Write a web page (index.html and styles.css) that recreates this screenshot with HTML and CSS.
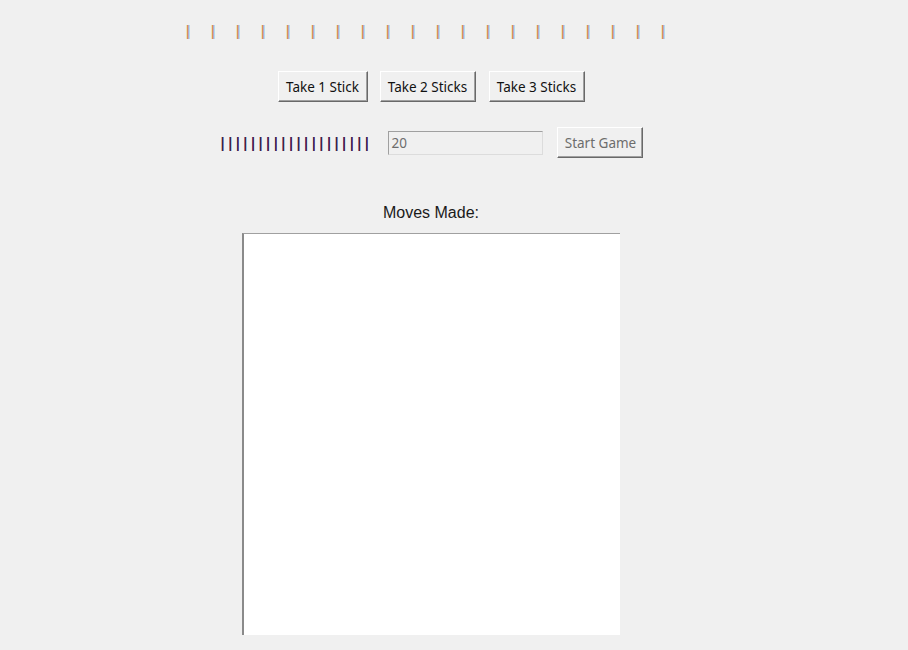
FILE: index.html
```html
<!DOCTYPE html>
<html lang="en">
<head>
<meta charset="utf-8">
<title>Sticks Game</title>
<link rel="stylesheet" href="styles.css">
</head>
<body>
<div class="app">
  <div class="pile">
    <span class="stick">|</span><span class="stick">|</span><span class="stick">|</span><span class="stick">|</span><span class="stick">|</span>
    <span class="stick">|</span><span class="stick">|</span><span class="stick">|</span><span class="stick">|</span><span class="stick">|</span>
    <span class="stick">|</span><span class="stick">|</span><span class="stick">|</span><span class="stick">|</span><span class="stick">|</span>
    <span class="stick">|</span><span class="stick">|</span><span class="stick">|</span><span class="stick">|</span><span class="stick">|</span>
  </div>
  <div class="moves">
    <button class="btn btn-1">Take 1 Stick</button>
    <button class="btn btn-2">Take 2 Sticks</button>
    <button class="btn btn-3">Take 3 Sticks</button>
  </div>
  <div class="setup">
    <span class="mini">||||||||||||||||||||</span>
    <input class="count" type="text" value="20" disabled>
    <button class="btn btn-start" disabled>Start Game</button>
  </div>
  <div class="log-label">Moves Made:</div>
  <div class="log"></div>
</div>
</body>
</html>
```
FILE: styles.css
```css
html, body {
  margin: 0;
  padding: 0;
  background: #f0f0f0;
}
body {
  width: 908px;
  height: 650px;
  overflow: hidden;
}
.app {
  width: 862px;
  display: flex;
  flex-direction: column;
  align-items: center;
  font-family: "Noto Sans", "Liberation Sans", sans-serif;
}
.pile {
  display: flex;
  margin-top: 22px;
  margin-right: 12px;
  height: 18px;
}
.stick {
  display: block;
  width: 25px;
  text-align: center;
  font-family: "Liberation Sans", sans-serif;
  font-size: 14px;
  line-height: 18px;
  color: #d4873a;
  text-shadow: 1px 0 0 #76a6cc;
}
.moves {
  display: flex;
  gap: 12px;
  margin-top: 31px;
}
.btn {
  height: 31px;
  padding: 0;
  background: #f0f0f0;
  border: none;
  border-top: 1px solid #ffffff;
  border-left: 1px solid #ffffff;
  border-right: 1px solid #696969;
  border-bottom: 1px solid #696969;
  box-shadow: inset -1px -1px 0 #a0a0a0;
  font-family: "Noto Sans", sans-serif;
  font-size: 13.5px;
  color: #111111;
}
.btn-1 { width: 90px; }
.btn-2 { width: 96px; }
.btn-3 { width: 96px; margin-left: 1px; }
.setup {
  display: flex;
  align-items: center;
  margin-top: 25px;
  margin-left: 2px;
}
.mini {
  font-family: "Liberation Sans", sans-serif;
  font-size: 14px;
  letter-spacing: 3.96px;
  color: #3a1648;
  text-shadow: 0.5px 0 0 #3a1648;
  line-height: 18px;
}
.count {
  box-sizing: border-box;
  width: 155px;
  height: 24px;
  margin-left: 16px;
  padding: 0 2px;
  background: #f0f0f0;
  border: 1px solid #dcdcdc;
  border-top-color: #a0a0a0;
  border-left-color: #a0a0a0;
  font-family: "Noto Sans", sans-serif;
  font-size: 13.5px;
  color: #6d6d6d;
  outline: none;
}
.btn-start {
  width: 86px;
  margin-left: 14px;
  color: #6d6d6d;
}
.log-label {
  margin-top: 46px;
  font-family: "Liberation Sans", sans-serif;
  font-size: 16px;
  line-height: 18px;
  color: #1a1a1a;
}
.log {
  box-sizing: border-box;
  width: 378px;
  height: 402px;
  margin-top: 11px;
  background: #ffffff;
  border-top: 1px solid #a0a0a0;
  border-left: 2px solid #8a8a8a;
}
```
